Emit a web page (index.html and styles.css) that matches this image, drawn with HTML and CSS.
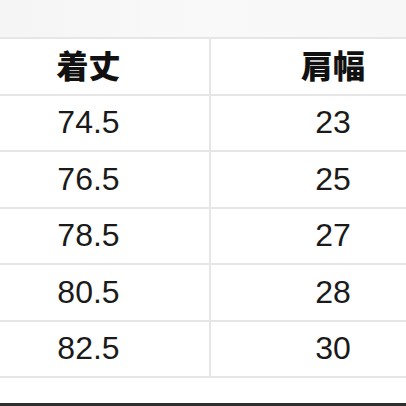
FILE: index.html
```html
<!DOCTYPE html>
<html lang="ja">
<head>
<meta charset="utf-8">
<link rel="stylesheet" href="styles.css">
</head>
<body>
<div class="page">
  <div class="top"></div>
  <div class="table">
    <div class="cell head">着丈</div>
    <div class="cell head">肩幅</div>
    <div class="cell">74.5</div>
    <div class="cell">23</div>
    <div class="cell">76.5</div>
    <div class="cell">25</div>
    <div class="cell">78.5</div>
    <div class="cell">27</div>
    <div class="cell">80.5</div>
    <div class="cell">28</div>
    <div class="cell">82.5</div>
    <div class="cell">30</div>
  </div>
  <div class="bottom"></div>
  <div class="edge"></div>
</div>
</body>
</html>
```
FILE: styles.css
```css
html, body {
  margin: 0;
  padding: 0;
  background: #ffffff;
  overflow: hidden;
}
.page {
  width: 406px;
  height: 406px;
  overflow: hidden;
  display: flex;
  flex-direction: column;
}
.top {
  height: 37px;
  flex: none;
  background: linear-gradient(90deg, #f5f5f5 0%, #f9f9f9 50%, #f7f7f7 100%);
}
.table {
  flex: none;
  display: grid;
  grid-template-columns: 241px 244px;
  grid-auto-rows: 54.5px;
  gap: 2px;
  padding: 2px 0;
  margin-left: -32px;
  width: 487px;
  background: #e6e6e6;
}
.cell {
  background: #ffffff;
  display: flex;
  align-items: center;
  justify-content: center;
  font-family: "Liberation Sans", Arial, sans-serif;
  font-size: 32px;
  color: #1a1a1a;
}
.cell.head {
  font-family: "Noto Sans CJK JP", "Noto Sans CJK SC", sans-serif;
  font-weight: 900;
  color: #111111;
  padding-bottom: 4px;
}
.bottom {
  flex: 1;
  background: #ffffff;
}
.edge {
  height: 3px;
  flex: none;
  background: #2e2e2e;
}
```
